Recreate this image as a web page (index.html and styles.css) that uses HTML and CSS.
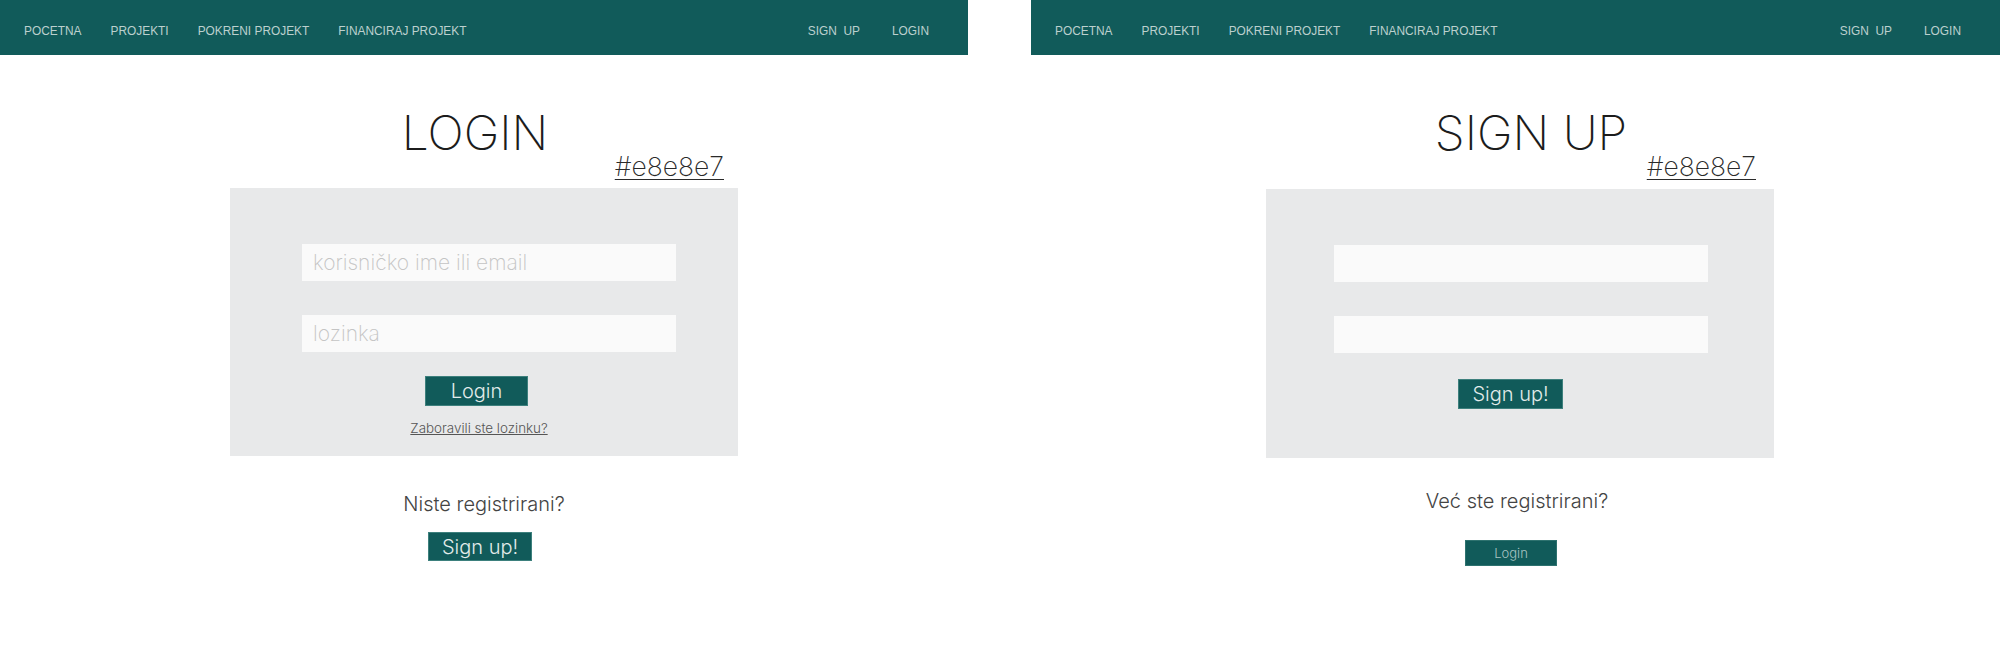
FILE: index.html
```html
<!DOCTYPE html>
<html lang="hr">
<head>
<meta charset="utf-8">
<title>Login / Sign up</title>
<link rel="stylesheet" href="styles.css">
</head>
<body>
<div class="screens">
  <section class="frame frame-login">
    <nav class="nav">
      <ul class="nav-left">
        <li>POCETNA</li>
        <li>PROJEKTI</li>
        <li>POKRENI PROJEKT</li>
        <li>FINANCIRAJ PROJEKT</li>
      </ul>
      <ul class="nav-right">
        <li>SIGN&nbsp; UP</li>
        <li>LOGIN</li>
      </ul>
    </nav>
    <main class="content">
      <h1 class="title title-login">LOGIN</h1>
      <div class="hex"><span>#e8e8e7</span></div>
      <div class="panel">
        <div class="field">korisničko ime ili email</div>
        <div class="field field-2">lozinka</div>
        <div class="center"><span class="btn btn-login">Login</span></div>
        <div class="center"><span class="forgot">Zaboravili ste lozinku?</span></div>
      </div>
      <p class="question q-login">Niste registrirani?</p>
      <div class="center"><span class="btn btn-alt">Sign up!</span></div>
    </main>
  </section>

  <section class="frame frame-signup">
    <nav class="nav">
      <ul class="nav-left">
        <li>POCETNA</li>
        <li>PROJEKTI</li>
        <li>POKRENI PROJEKT</li>
        <li>FINANCIRAJ PROJEKT</li>
      </ul>
      <ul class="nav-right">
        <li>SIGN&nbsp; UP</li>
        <li>LOGIN</li>
      </ul>
    </nav>
    <main class="content content-signup">
      <h1 class="title title-signup">SIGN UP</h1>
      <div class="hex hex-signup"><span>#e8e8e7</span></div>
      <div class="panel panel-signup">
        <div class="field"></div>
        <div class="field field-2"></div>
        <div class="center"><span class="btn btn-signup">Sign up!</span></div>
      </div>
      <p class="question q-signup">Već ste registrirani?</p>
      <div class="center"><span class="btn btn-small">Login</span></div>
    </main>
  </section>
</div>
</body>
</html>
```

FILE: styles.css
```css
* { box-sizing: border-box; }
html, body { margin: 0; padding: 0; background: #ffffff; }
body { font-family: "Inter", "Liberation Sans", sans-serif; color: #333; }

.screens {
  display: flex;
  justify-content: space-between;
  width: 2000px;
}
.frame { width: 968px; }
.frame-signup { width: 969px; }

.nav {
  height: 55px;
  background: #115b5a;
  display: flex;
  justify-content: space-between;
  align-items: center;
  padding: 6px 39px 0 24px;
  font-family: "Liberation Sans", Arial, sans-serif;
  font-size: 11.9px;
  color: #bcd0ce;
}
.nav ul { list-style: none; margin: 0; padding: 0; display: flex; gap: 29px; }
.nav-right { gap: 32px !important; }

.content {
  margin-left: 230px;
  width: 508px;
}
.content-signup { margin-left: 235px; }

.title {
  margin: 60px 0 0;
  font-size: 48px;
  line-height: 36px;
  font-weight: 200;
  color: #1c1c1c;
  text-align: center;
}
.title-login { padding-right: 18px; }
.title-signup { padding-left: 22px; }

.hex {
  height: 30px;
  line-height: 30px;
  font-size: 26.5px;
  font-weight: 200;
  text-align: right;
  padding-right: 14px;
  color: #2a2a2a;
}
.hex-signup { padding-right: 18px; }
.hex span { text-decoration: underline; text-decoration-thickness: 1px; text-underline-offset: 3px; }

.panel {
  margin-top: 7px;
  height: 268px;
  background: #e8e9ea;
  padding: 56px 62px 0 72px;
}
.panel-signup { height: 269px; margin-top: 8px; padding-left: 68px; padding-right: 66px; }

.field {
  height: 37px;
  background: #fafafa;
  font-size: 21px;
  font-weight: 200;
  line-height: 37px;
  color: #c4c4c4;
  padding-left: 11px;
}
.field-2 { margin-top: 34px; }

.center { display: flex; justify-content: center; }

.btn {
  display: inline-flex;
  align-items: center;
  justify-content: center;
  background: #115b5a;
  border: 1px solid #3d807d;
  color: #e3ecea;
  font-weight: 300;
}
.btn-login {
  margin-top: 24px;
  margin-right: 25px;
  width: 103px;
  height: 30px;
  font-size: 20px;
}
.btn-signup {
  margin-top: 26px;
  margin-right: 21px;
  width: 105px;
  height: 30px;
  font-size: 20px;
}
.forgot {
  margin-top: 15px;
  margin-right: 20px;
  font-size: 13.4px;
  line-height: 15px;
  font-weight: 300;
  color: #555;
  text-decoration: underline;
}

.question {
  margin: 38px 0 0;
  font-size: 20px;
  line-height: 20px;
  font-weight: 300;
  color: #444;
  text-align: center;
}
.q-login { padding-right: 0; }
.q-signup { margin-top: 33px; padding-right: 6px; font-size: 20px; }

.btn-alt {
  margin-top: 18px;
  margin-right: 8px;
  width: 104px;
  height: 29px;
  font-size: 20px;
}
.btn-small {
  margin-top: 29px;
  margin-right: 18px;
  width: 92px;
  height: 26px;
  font-size: 13px;
  color: #a9c4c2;
  border-color: #2e726f;
}
```
